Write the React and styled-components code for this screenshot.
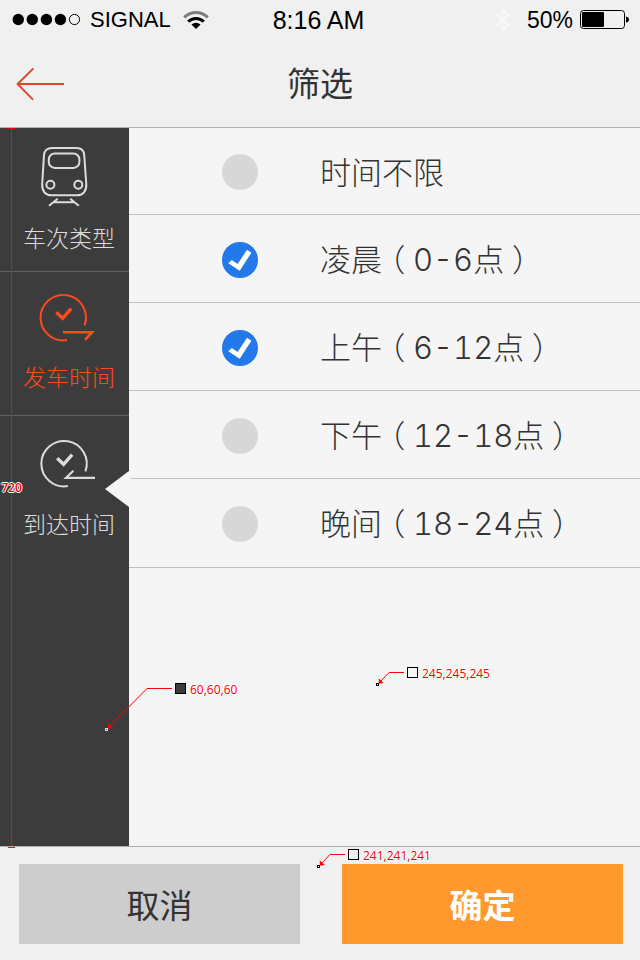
import React, { useState } from "react";
import styled, { createGlobalStyle } from "styled-components";

const GlobalStyle = createGlobalStyle`
  *, *::before, *::after { box-sizing: border-box; }
  body {
    margin: 0;
    background: #f0f0f0;
    color: #333;
    font-family: "Noto Sans CJK SC", sans-serif;
  }
  button { font-family: inherit; border: 0; padding: 0; margin: 0; cursor: pointer; }
`;

const Screen = styled.div`
  min-height: 100vh;
  display: flex;
  flex-direction: column;
`;

const StatusBar = styled.div`
  height: 40px;
  padding: 0 11px 0 12px;
  display: grid;
  grid-template-columns: 1fr auto 1fr;
  align-items: center;
  color: #000;
  font-family: "Liberation Sans", Arial, sans-serif;
  font-size: 23px;
  line-height: 40px;
  white-space: nowrap;
`;

const StatusGroup = styled.div`
  display: flex;
  align-items: center;
  justify-content: ${(p) => (p.$end ? "flex-end" : "flex-start")};
  gap: ${(p) => (p.$end ? 7 : 9)}px;
`;

const Carrier = styled.span`
  font-size: 22px;
  margin-right: 3px;
`;

const Clock = styled.span`
  font-size: 25px;
  padding-right: 4px;
`;

const BluetoothIcon = styled.svg`
  margin-right: 10px;
`;

const NavBar = styled.header`
  height: 88px;
  padding: 0 16px;
  display: grid;
  grid-template-columns: 1fr auto 1fr;
  align-items: center;
  border-bottom: 1px solid #b0b0b0;
`;

const BackButton = styled.button`
  display: flex;
  justify-self: start;
  background: none;
`;

const Title = styled.h1`
  margin: 0;
  padding-bottom: 4px;
  font-size: 33px;
  line-height: 40px;
  font-weight: 400;
`;

const Body = styled.div`
  position: relative;
  flex: 1;
  display: flex;
  background: #f5f5f5;
`;

const Sidebar = styled.nav`
  flex: none;
  width: 129px;
  background: #3c3c3c;
`;

const SideItem = styled.button`
  position: relative;
  width: 100%;
  height: 144px;
  padding: 18px 0 0 9px;
  display: flex;
  flex-direction: column;
  align-items: center;
  gap: ${(p) => p.$gap}px;
  background: none;
  color: ${(p) => (p.$active ? "#ff4a1c" : "#dcdcdc")};
  border-bottom: 1px solid #626262;
  font-size: 23px;
  font-weight: 300;
  line-height: 30px;

  &:last-of-type { border-bottom: 0; }
`;

const SideIcon = styled.svg`
  flex: none;
  width: 61px;
  height: 60px;
  margin-right: 9px;
  overflow: visible;
  fill: none;
  stroke: currentColor;
  stroke-width: 2;
`;

const Notch = styled.span`
  position: absolute;
  right: -2px;
  top: 55px;
  width: 26px;
  height: 36px;
  background: #f5f5f5;
  clip-path: polygon(0 50%, 92% 0, 100% 0, 100% 100%, 92% 100%);
`;

const Options = styled.ul`
  flex: 1;
  margin: 0;
  padding: 0;
  list-style: none;
`;

const OptionRow = styled.li`
  height: 88px;
  border-bottom: 1px solid #c0c0c0;

  &:first-child { height: 87px; }
  &:last-child { height: 89px; }
`;

const OptionLabel = styled.label`
  height: 100%;
  padding: 2px 16px 0 93px;
  display: flex;
  align-items: center;
  gap: 62px;
  font-size: 31px;
  font-weight: 300;
  line-height: 40px;
  white-space: nowrap;
  cursor: pointer;
`;

const OptionText = styled.span`
  padding-bottom: 2px;
`;

const Tick = styled.span`
  flex: none;
  display: grid;
  width: 36px;
  height: 36px;

  > * { grid-area: 1 / 1; }
`;

const TickInput = styled.input`
  appearance: none;
  margin: 0;
  width: 36px;
  height: 36px;
  border-radius: 50%;
  background: #d7d7d7;
  cursor: pointer;

  &:checked { background: #2378ea; }
  &:not(:checked) + svg { visibility: hidden; }
`;

const TickMark = styled.svg`
  width: 36px;
  height: 36px;
  fill: #fff;
  pointer-events: none;
`;

const Bracket = styled.span`
  display: inline-block;
  width: 31px;
  text-align: center;
  font-feature-settings: "halt";
`;

const Hours = styled.span`
  font-family: Inter, "Noto Sans CJK SC", sans-serif;
  font-variant-numeric: tabular-nums;
`;

const Footer = styled.footer`
  position: relative;
  padding: 17px 17px 16px 19px;
  display: flex;
  gap: 42px;
  border-top: 1px solid #b0b0b0;
`;

const ActionButton = styled.button`
  flex: 1;
  height: 80px;
  font-size: 33px;
  line-height: 40px;
  background: ${(p) => (p.$primary ? "#ff992d" : "#cdcdcd")};
  color: ${(p) => (p.$primary ? "#fff" : "#333")};
  font-weight: ${(p) => (p.$primary ? 700 : 400)};
`;

const noteText = `
  color: #f00000;
  font-family: "Open Sans", sans-serif;
  font-size: 12px;
  line-height: 14px;
  text-shadow: 1px 0 #fff, -1px 0 #fff, 0 1px #fff, 0 -1px #fff;
`;

const Ruler = styled.div`
  position: absolute;
  left: 8px;
  top: 0;
  bottom: -2px;
  width: 7px;
  display: flex;
  align-items: center;
  justify-content: center;
  border-top: 1px solid #f00000;
  border-bottom: 1px solid #e81010;
  pointer-events: none;
  ${noteText}

  &::before {
    content: "";
    position: absolute;
    left: 3px;
    top: 0;
    bottom: 0;
    width: 1px;
    background: #e01010;
  }
`;

const RulerValue = styled.span`
  position: relative;
  font-weight: 600;
`;

const CalloutBox = styled.div`
  position: absolute;
  left: ${(p) => p.$left}px;
  top: ${(p) => p.$top}px;
  display: flex;
  align-items: flex-start;
  pointer-events: none;
  ${noteText}
`;

const CalloutSwatch = styled.span`
  width: 11px;
  height: 11px;
  margin: 0 4px 0 3px;
  border: 1px solid #000;
  background: ${(p) => p.$color};
`;

function Callout({ left, top, width, drop, elbow, color, pin = "#000", children }) {
  return (
    <CalloutBox $left={left} $top={top}>
      <svg width={width} height={drop + 2} fill="none" aria-hidden="true">
        <path d={`M4 ${drop - 3}L${elbow} 5.5H${width}`} stroke="#f00" />
        <path d={`M2.8 ${drop - 6.5}l5 4.5l-5 .8z`} fill="#f00" />
        <rect x="0.5" y={drop - 1.5} width="2" height="2" stroke={pin} />
      </svg>
      <CalloutSwatch $color={color} />
      <span>{children}</span>
    </CalloutBox>
  );
}

const TrainIcon = () => (
  <SideIcon viewBox="0 0 61 60" aria-hidden="true">
    <path d="M18 1.9H42.5C47 1.9 49.9 4.6 50.2 9L52.3 38C52.6 45 49 49.3 43 49.3H17.5C11.5 49.3 7.8 45 8.2 38L10 9C10.3 4.6 13.5 1.9 18 1.9Z" />
    <rect x="14.8" y="7.5" width="30.6" height="14.4" rx="6" />
    <circle cx="16.4" cy="38.7" r="4" />
    <circle cx="44.3" cy="38.7" r="4" />
    <path d="M23.7 52.7L15 59.7M36.2 52.7L44.8 59.7M19.5 56.3H40.5" />
  </SideIcon>
);

const DepartIcon = () => (
  <SideIcon viewBox="0 0 61 60" aria-hidden="true">
    <path d="M50.6 35.4A22.7 22.7 0 1 0 33 50.1" />
    <path d="M22.4 22.2L28.7 28.3L37.2 18.7" strokeWidth="3.4" />
    <path d="M29 42.3H58L51 49.8" strokeWidth="2.6" />
  </SideIcon>
);

const ArriveIcon = () => (
  <SideIcon viewBox="0 0 61 60" aria-hidden="true">
    <path d="M51.4 37.4A22.7 22.7 0 1 0 33.8 52.1" />
    <path d="M23.2 24.2L29.6 30.3L38.2 20.7" strokeWidth="3.4" />
    <path d="M61 43.8H32L39.4 36.7" strokeWidth="2.2" />
  </SideIcon>
);

const sections = [
  { id: "type", label: "车次类型", Icon: TrainIcon, gap: 16 },
  { id: "depart", label: "发车时间", Icon: DepartIcon, gap: 11, active: true },
  { id: "arrive", label: "到达时间", Icon: ArriveIcon, gap: 14, notch: true },
];

const options = [
  { name: "时间不限" },
  { name: "凌晨", hours: "0-6" },
  { name: "上午", hours: "6-12" },
  { name: "下午", hours: "12-18" },
  { name: "晚间", hours: "18-24" },
];

export default function App() {
  const [checked, setChecked] = useState([false, true, true, false, false]);
  const toggle = (i) => setChecked((c) => c.map((v, k) => (k === i ? !v : v)));

  return (
    <Screen>
      <GlobalStyle />
      <StatusBar>
        <StatusGroup>
          <svg width="69" height="14" viewBox="0 0 69 14" aria-hidden="true">
            {[6.3, 20.3, 34.4, 48.4].map((x) => (
              <circle key={x} cx={x} cy="6.5" r="5.7" />
            ))}
            <circle cx="62.5" cy="6.5" r="5.1" fill="none" stroke="#000" />
          </svg>
          <Carrier>SIGNAL</Carrier>
          <svg width="26" height="20" viewBox="0 0 26 20" fill="none" strokeWidth="3" aria-hidden="true">
            <path d="M1.2 7.4C8 .8 18 .8 24.8 7.4" stroke="#7d7d7d" />
            <path d="M5.2 11.6C9.8 7.4 16.2 7.4 20.8 11.6" stroke="#000" />
            <path d="M8.4 14.6Q13 11 17.6 14.6L13 19Z" fill="#000" />
          </svg>
        </StatusGroup>
        <Clock>8:16 AM</Clock>
        <StatusGroup $end>
          <BluetoothIcon width="15" height="26" viewBox="0 0 15 26" fill="none" stroke="#f9f9f9" strokeWidth="2" aria-hidden="true">
            <path d="M1 7L13 18L7.5 23V3L13 8L1 19" />
          </BluetoothIcon>
          <span>50%</span>
          <svg width="49" height="20" viewBox="0 0 49 20" aria-hidden="true">
            <rect x="0.5" y="0.5" width="44" height="18" rx="3" fill="none" stroke="#000" />
            <rect x="2" y="2" width="22" height="15" rx="1" />
            <path d="M46 6.5Q49 7 49 9.5T46 12.5Z" />
          </svg>
        </StatusGroup>
      </StatusBar>

      <NavBar>
        <BackButton type="button" aria-label="返回">
          <svg width="48" height="34" viewBox="0 0 48 34" fill="none" stroke="#d94a2a" strokeWidth="2" aria-hidden="true">
            <path d="M17.4 1.4L1.6 17L17 32.6M1.6 17H48" />
          </svg>
        </BackButton>
        <Title>筛选</Title>
      </NavBar>

      <Body>
        <Sidebar>
          {sections.map(({ id, label, Icon, gap, active, notch }) => (
            <SideItem key={id} type="button" $gap={gap} $active={active}>
              <Icon />
              <span>{label}</span>
              {notch && <Notch />}
            </SideItem>
          ))}
        </Sidebar>
        <Options>
          {options.map((o, i) => (
            <OptionRow key={o.name}>
              <OptionLabel>
                <Tick>
                  <TickInput type="checkbox" checked={checked[i]} onChange={() => toggle(i)} />
                  <TickMark viewBox="0 0 36 36" aria-hidden="true">
                    <path d="M6.3 21.3L9.8 18L15.7 22L25 7.7L29.4 10.7L17.7 28.7Z" />
                  </TickMark>
                </Tick>
                <OptionText>
                  {o.name}
                  {o.hours && (
                    <>
                      <Bracket>（</Bracket>
                      <Hours>{o.hours}</Hours>
                      点<Bracket>）</Bracket>
                    </>
                  )}
                </OptionText>
              </OptionLabel>
            </OptionRow>
          ))}
        </Options>
        <Ruler>
          <RulerValue>720</RulerValue>
        </Ruler>
        <Callout left={105} top={555} width={67} drop={47} elbow={42} color="#3c3c3c" pin="#ddd">
          60,60,60
        </Callout>
        <Callout left={376} top={539} width={28} drop={18} elbow={13} color="#f5f5f5">
          245,245,245
        </Callout>
      </Body>

      <Footer>
        <ActionButton type="button">取消</ActionButton>
        <ActionButton type="button" $primary>
          确定
        </ActionButton>
        <Callout left={317} top={2} width={28} drop={18} elbow={13} color="#f1f1f1">
          241,241,241
        </Callout>
      </Footer>
    </Screen>
  );
}
